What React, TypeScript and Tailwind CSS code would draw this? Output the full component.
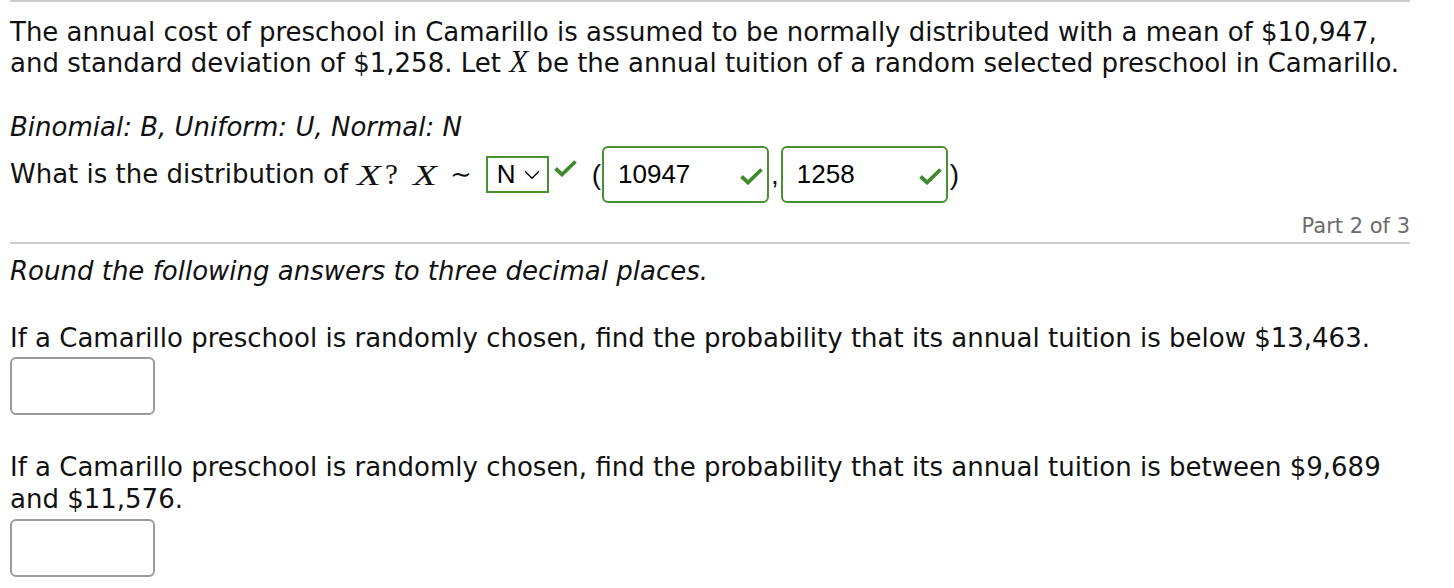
import { ChevronDown } from 'lucide-react';

// green tick used next to graded answers
function Tick({ className = '' }: { className?: string }) {
  return (
    <svg viewBox="0 0 25 18" className={className} fill="none">
      <path d="M2.5 9.5 L9 15.5 L22.5 2.5" stroke="#3f8a2c" strokeWidth="3.8" strokeLinecap="butt" strokeLinejoin="miter" />
    </svg>
  );
}

function AnswerBox({ value }: { value: string }) {
  return (
    <div className="flex items-center justify-between w-[167px] h-[57px] border-2 border-[#4a8f32] rounded-[6px] pl-[14px] pr-[3px]">
      <span className="font-['Liberation_Sans',Arial,sans-serif] text-[26px] text-black">{value}</span>
      <Tick className="w-[25px] h-[18px] mt-[2px]" />
    </div>
  );
}

function EmptyBox() {
  return <div className="w-[145px] h-[58px] border-2 border-[#9b9b9b] rounded-[6px] bg-white" />;
}

const mathX = "font-['Liberation_Serif','Times_New_Roman',serif] italic text-[31px]";
const wideX = "inline-block font-['Liberation_Serif','Times_New_Roman',serif] italic text-[30px] scale-x-130 origin-left w-[28px]";

export default function App() {
  return (
    <div className="bg-white w-[1454px] h-[588px] overflow-hidden pl-[10px] font-['DejaVu_Sans',sans-serif] text-[26px] text-[#111] leading-[31px]">
      <div className="w-[1400px] border-t-2 border-[#cccccc]">
        <p className="pt-[15px] leading-[30px] whitespace-nowrap">
          The annual cost of preschool in Camarillo is assumed to be normally distributed with a mean of $10,947,
          <br />
          and standard deviation of $1,258. Let <span className={mathX}>X</span> be the annual tuition of a random selected preschool in Camarillo.
        </p>

        <p className="mt-[34px] italic">Binomial: B, Uniform: U, Normal: N</p>

        <div className="mt-[3px] flex items-center h-[57px] whitespace-nowrap">
          <span className="w-[347px]">What is the distribution of</span>
          <span className={wideX}>X</span>
          <span className="font-['Liberation_Serif',serif] text-[29px]">?</span>
          <span className={`${wideX} ml-[15px]`}>X</span>
          <span className="font-['DejaVu_Serif',serif] text-[26px] ml-[9px] mr-[14px]">∼</span>
          <div className="flex items-center gap-[4px] w-[63px] h-[37px] border-2 border-[#4a8f32] pl-[9px] font-['Liberation_Sans',Arial,sans-serif] text-[26px] text-black">
            N
            <ChevronDown className="w-[26px] h-[26px] mt-[1px]" strokeWidth={1.2} />
          </div>
          <Tick className="w-[25px] h-[18px] ml-[4px] mb-[14px]" />
          <span className="ml-[14px] mr-[1px] font-['Liberation_Sans',Arial,sans-serif] text-[28px]">(</span>
          <AnswerBox value="10947" />
          <span className="mx-[2px] font-['Liberation_Sans',Arial,sans-serif] text-[28px]">,</span>
          <AnswerBox value="1258" />
          <span className="ml-[2px] font-['Liberation_Sans',Arial,sans-serif] text-[28px]">)</span>
        </div>

        <div className="mt-[10px] text-right text-[21px] leading-[26px] text-[#6b6b6b]">Part 2 of 3</div>
        <div className="mt-[3px] border-t-2 border-[#cccccc]" />

        <p className="mt-[12px] italic">Round the following answers to three decimal places.</p>

        <p className="mt-[36px] whitespace-nowrap">
          If a Camarillo preschool is randomly chosen, find the probability that its annual tuition is below $13,463.
        </p>
        <div className="mt-[3px]">
          <EmptyBox />
        </div>

        <p className="mt-[36px] leading-[32px] whitespace-nowrap">
          If a Camarillo preschool is randomly chosen, find the probability that its annual tuition is between $9,689
          <br />
          and $11,576.
        </p>
        <div className="mt-[4px]">
          <EmptyBox />
        </div>
      </div>
    </div>
  );
}
